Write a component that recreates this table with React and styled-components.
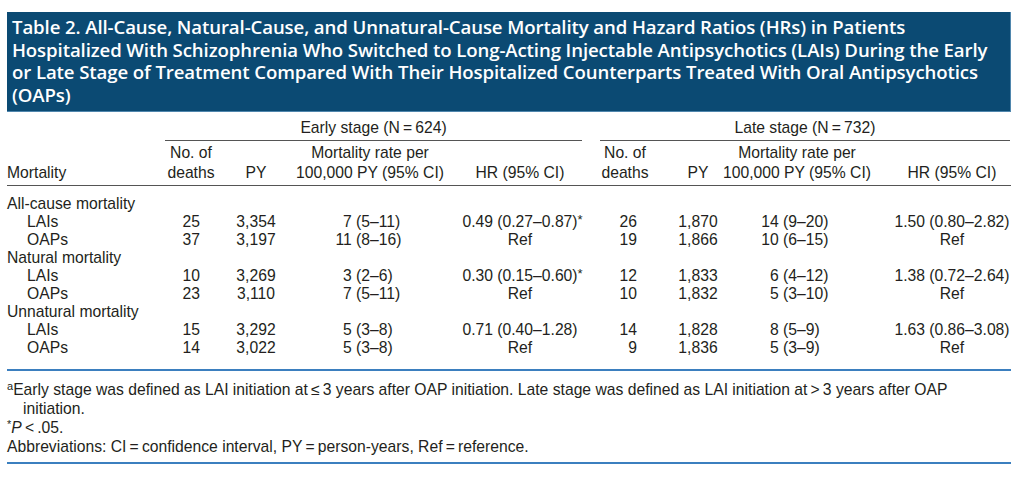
import React from 'react';
import styled, { createGlobalStyle } from 'styled-components';

const Global = createGlobalStyle`
  html, body { margin: 0; padding: 0; background: #ffffff; }
  body {
    font-family: "Liberation Sans", Arial, sans-serif;
    color: #231f20;
  }
`;

/* label | E deaths | E PY | E rate | E HR | gap | L deaths | L PY | L rate | L HR */
const COLS = '153px 62px 68px 160px 140px 8px 54px 70px 150px 139px';
const T = '\u2009';

const Page = styled.div`
  width: 1004px;
  padding: 12px 13px 0 7px;
`;

const TitleBar = styled.div`
  background: #0b4a73;
  color: #ffffff;
  font-family: "Open Sans", "Noto Sans", sans-serif;
  font-weight: 600;
  font-size: 18.6px;
  line-height: 22.5px;
  letter-spacing: -0.1px;
  padding: 4px 6px 5px 5px;
  border-right: 1px solid #4f86ad;
  border-bottom: 1px solid #4f86ad;
`;

const Table = styled.div`
  font-size: 15.7px;
  line-height: 18px;
`;

const Row = styled.div`
  display: grid;
  grid-template-columns: ${COLS};
  align-items: end;
`;

const GroupRow = styled(Row)`
  padding-top: 7px;
`;

const Group = styled.div`
  grid-column: ${(p) => p.$span};
  margin: ${(p) => p.$margin};
  text-align: center;
  border-bottom: 1px solid #555555;
  padding-bottom: 3px;
`;

const HeadRow = styled(Row)`
  border-bottom: 1px solid #555555;
  padding: 2px 0 2px;
`;

const Head = styled.div`
  text-align: ${(p) => p.$align || 'center'};
  padding-left: ${(p) => p.$shift || 0}px;
  line-height: 20px;
  white-space: nowrap;
`;

const BodyBlock = styled.div`
  padding: 9px 0 12px;
  border-bottom: 2px solid #3b7fbf;
`;

const Label = styled.div`
  padding-left: ${(p) => (p.$indent ? '20px' : '0')};
  white-space: nowrap;
`;

const Num = styled.div`
  text-align: ${(p) => p.$align || 'right'};
  padding-right: ${(p) => p.$pad || 0}px;
  padding-left: ${(p) => p.$lpad || 0}px;
`;

const Rate = styled.div`
  display: grid;
  grid-template-columns: ${(p) => p.$dash}px auto;
  white-space: nowrap;
`;

const RateLeft = styled.span`
  text-align: right;
`;

const HR = styled.div`
  text-align: center;
  white-space: nowrap;
  padding-left: ${(p) => p.$shift || 0}px;
`;

const HRText = styled.span`
  position: relative;
`;

const Star = styled.span`
  position: absolute;
  left: 100%;
  top: -2px;
  font-size: 13px;
`;

const Notes = styled.div`
  font-size: 15.7px;
  line-height: 19px;
  padding: 9px 0 6px;
  border-bottom: 2px solid #3b7fbf;
`;

const Note = styled.div`
  padding-left: ${(p) => (p.$hang ? '16px' : '0')};
  text-indent: ${(p) => (p.$hang ? '-16px' : '0')};
  white-space: nowrap;
`;

const Sup = styled.sup`
  font-size: 11px;
  line-height: 0;
  vertical-align: 5px;
`;

const Ital = styled.i`
  font-style: italic;
`;

const rows = [
  { group: 'All-cause mortality' },
  { label: 'LAIs', e: ['25', '3,354', ['7 (5', '–11)'], '0.49 (0.27–0.87)', true], l: ['26', '1,870', ['14 (9', '–20)'], '1.50 (0.80–2.82)'] },
  { label: 'OAPs', e: ['37', '3,197', ['11 (8', '–16)'], 'Ref'], l: ['19', '1,866', ['10 (6', '–15)'], 'Ref'] },
  { group: 'Natural mortality' },
  { label: 'LAIs', e: ['10', '3,269', ['3 (2', '–6)'], '0.30 (0.15–0.60)', true], l: ['12', '1,833', ['6 (4', '–12)'], '1.38 (0.72–2.64)'] },
  { label: 'OAPs', e: ['23', '3,110', ['7 (5', '–11)'], 'Ref'], l: ['10', '1,832', ['5 (3', '–10)'], 'Ref'] },
  { group: 'Unnatural mortality' },
  { label: 'LAIs', e: ['15', '3,292', ['5 (3', '–8)'], '0.71 (0.40–1.28)'], l: ['14', '1,828', ['8 (5', '–9)'], '1.63 (0.86–3.08)'] },
  { label: 'OAPs', e: ['14', '3,022', ['5 (3', '–8)'], 'Ref'], l: ['9', '1,836', ['5 (3', '–9)'], 'Ref'] },
];

function StageCells({ d, s }) {
  const [deaths, py, rate, hr, star] = d;
  return (
    <>
      <Num $pad={s.pad}>{deaths}</Num>
      <Num $align="center" $lpad={s.pyShift}>{py}</Num>
      <Rate $dash={s.dash}>
        <RateLeft>{rate[0]}</RateLeft>
        <span>{rate[1]}</span>
      </Rate>
      <HR $shift={s.hrShift}>
        <HRText>
          {hr}
          {star && <Star>*</Star>}
        </HRText>
      </HR>
    </>
  );
}

const EARLY = { pad: 22, pyShift: 0, dash: 80, hrShift: -4 };
const LATE = { pad: 15, pyShift: 22, dash: 75, hrShift: 21 };

function HeadCells({ s }) {
  return (
    <>
      <Head>No. of<br />deaths</Head>
      <Head $shift={s.pyShift}>PY</Head>
      <Head>Mortality rate per<br />100,000 PY (95% CI)</Head>
      <Head $shift={s.hrShift > 0 ? s.hrShift : 0}>HR (95% CI)</Head>
    </>
  );
}

export default function App() {
  return (
    <Page>
      <Global />
      <TitleBar>
        Table 2. All-Cause, Natural-Cause, and Unnatural-Cause Mortality and Hazard Ratios (HRs) in Patients Hospitalized With Schizophrenia Who Switched to Long-Acting Injectable Antipsychotics (LAIs) During the Early or Late Stage of Treatment Compared With Their Hospitalized Counterparts Treated With Oral Antipsychotics (OAPs)
      </TitleBar>
      <Table>
        <GroupRow>
          <Group $span="2 / 6" $margin="0 8px 0 5px">Early stage (N{T}={T}624)</Group>
          <Group $span="7 / 11" $margin="0 1px 0 2px">Late stage (N{T}={T}732)</Group>
        </GroupRow>
        <HeadRow>
          <Head $align="left">Mortality</Head>
          <HeadCells s={EARLY} />
          <div />
          <HeadCells s={LATE} />
        </HeadRow>
        <BodyBlock>
          {rows.map((r, i) =>
            r.group ? (
              <Row key={i}>
                <Label>{r.group}</Label>
              </Row>
            ) : (
              <Row key={i}>
                <Label $indent>{r.label}</Label>
                <StageCells d={r.e} s={EARLY} />
                <div />
                <StageCells d={r.l} s={LATE} />
              </Row>
            )
          )}
        </BodyBlock>
      </Table>
      <Notes>
        <Note $hang>
          <Sup>a</Sup>Early stage was defined as LAI initiation at{T}≤{T}3 years after OAP initiation. Late stage was defined as LAI initiation at{T}&gt;{T}3 years after OAP
          <br />initiation.
        </Note>
        <Note>
          <Sup>*</Sup><Ital>P</Ital>{T}&lt;{T}.05.
        </Note>
        <Note>Abbreviations: CI{T}={T}confidence interval, PY{T}={T}person-years, Ref{T}={T}reference.</Note>
      </Notes>
    </Page>
  );
}
